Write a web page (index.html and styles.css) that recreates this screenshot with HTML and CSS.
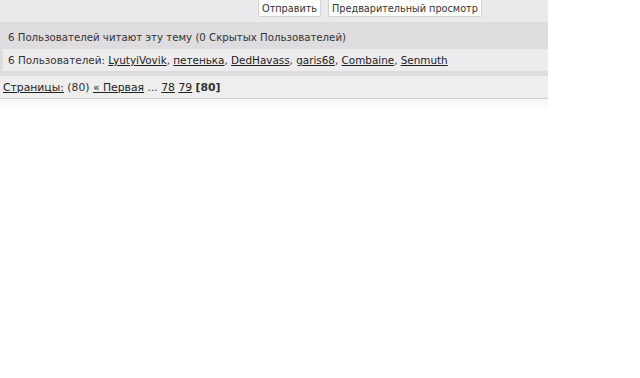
FILE: index.html
```html
<!DOCTYPE html>
<html lang="ru">
<head>
    <meta charset="UTF-8">
    <title>Тема форума</title>
    <link rel="stylesheet" href="styles.css">
</head>
<body>
    <div class="forum">
        <div class="knopki">
            <button class="knopka">Отправить</button>
            <button class="knopka">Предварительный просмотр</button>
        </div>

        <div class="chitayut">
            <div class="zagolovok">6 Пользователей читают эту тему (0 Скрытых Пользователей)</div>
            <div class="spisok">6 Пользователей: <a href="#">LyutyiVovik</a>, <a href="#">петенька</a>, <a href="#">DedHavass</a>, <a href="#">garis68</a>, <a href="#">Combaine</a>, <a href="#">Senmuth</a></div>
        </div>

        <div class="stranicy">
            <a href="#">Страницы:</a> (80) <a href="#">« Первая</a> ... <a href="#">78</a> <a href="#">79</a> <b>[80]</b>
        </div>
        <div class="niz"></div>
    </div>
</body>
</html>
```

FILE: styles.css
```css
body {
    margin: 0;
    background-color: #ffffff;
    font-family: "DejaVu Sans", Verdana, sans-serif;
    font-size: 10px;
    color: #333333;
}
a {
    color: #222222;
}
.forum {
    width: 548px;
}
.knopki {
    display: flex;
    gap: 7px;
    height: 22px;
    padding-left: 258px;
    background-color: #ebe9ec;
}
.knopka {
    height: 18px;
    margin-top: -1px;
    padding: 0 3px;
    font-family: "DejaVu Sans", Verdana, sans-serif;
    font-size: 9.7px;
    color: #333333;
    background-color: #ffffff;
    border: 1px solid #d4d2d5;
    border-radius: 2px;
}
.chitayut {
    background-color: #dedcdf;
    padding: 0 0 5px 3px;
}
.zagolovok {
    height: 27px;
    line-height: 31px;
    padding-left: 5px;
    font-size: 10.2px;
}
.spisok {
    height: 22px;
    line-height: 22px;
    padding-left: 5px;
    font-size: 10.4px;
    background-color: #eeebef;
}
.stranicy {
    height: 22px;
    line-height: 23px;
    padding-left: 3px;
    font-size: 10.8px;
    background-color: #eeeeee;
    border-bottom: 1px solid #cccccc;
}
.niz {
    height: 12px;
    background: linear-gradient(#f6f6f6, #ffffff);
}
```
